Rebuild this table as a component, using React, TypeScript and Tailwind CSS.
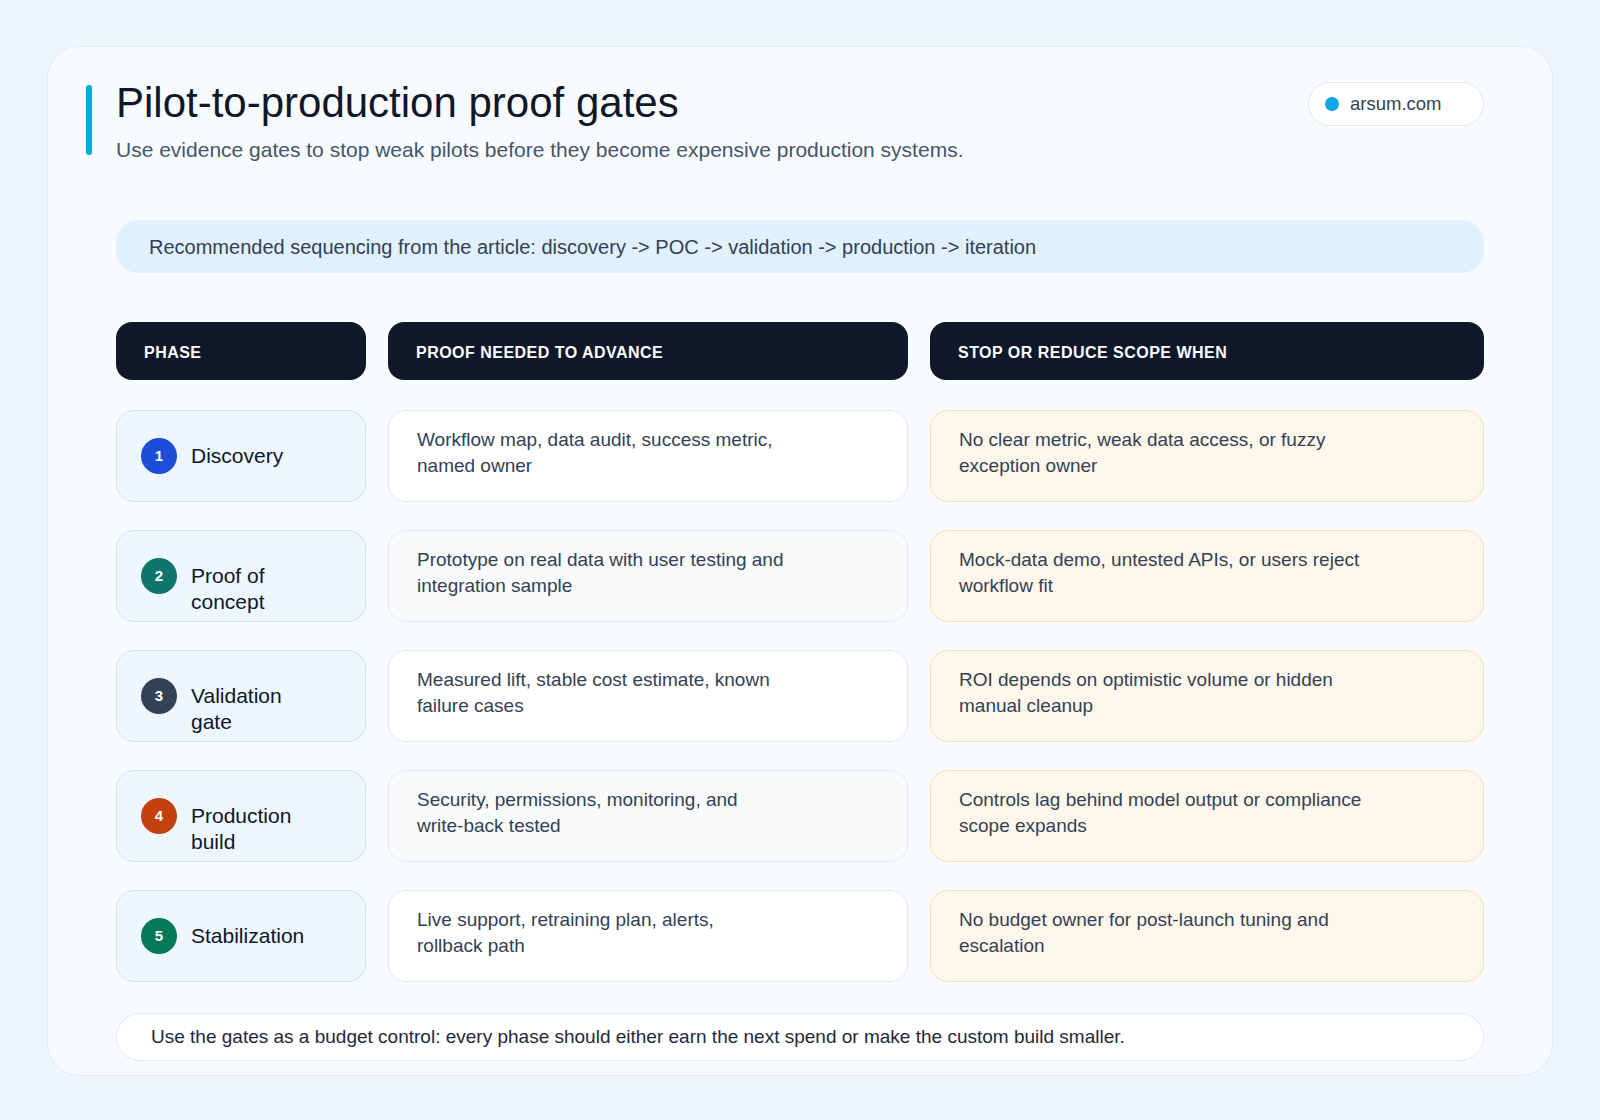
const rows = [
  {
    n: "1",
    phase: ["Discovery"],
    dot: "bg-[#1d4ed8]",
    proof: ["Workflow map, data audit, success metric,", "named owner"],
    stop: ["No clear metric, weak data access, or fuzzy", "exception owner"],
    shade: false,
  },
  {
    n: "2",
    phase: ["Proof of", "concept"],
    dot: "bg-[#0f766e]",
    proof: ["Prototype on real data with user testing and", "integration sample"],
    stop: ["Mock-data demo, untested APIs, or users reject", "workflow fit"],
    shade: true,
  },
  {
    n: "3",
    phase: ["Validation", "gate"],
    dot: "bg-[#334155]",
    proof: ["Measured lift, stable cost estimate, known", "failure cases"],
    stop: ["ROI depends on optimistic volume or hidden", "manual cleanup"],
    shade: false,
  },
  {
    n: "4",
    phase: ["Production", "build"],
    dot: "bg-[#c2410c]",
    proof: ["Security, permissions, monitoring, and", "write-back tested"],
    stop: ["Controls lag behind model output or compliance", "scope expands"],
    shade: true,
  },
  {
    n: "5",
    phase: ["Stabilization"],
    dot: "bg-[#047857]",
    proof: ["Live support, retraining plan, alerts,", "rollback path"],
    stop: ["No budget owner for post-launch tuning and", "escalation"],
    shade: false,
  },
];

const cols = "grid grid-cols-[250px_520px_1fr] gap-x-[22px]";

function Lines({ lines }: { lines: string[] }) {
  return (
    <>
      {lines.map((l) => (
        <span key={l} className="block whitespace-nowrap">
          {l}
        </span>
      ))}
    </>
  );
}

export default function App() {
  return (
    <div className="min-h-screen bg-[#eef5fc] px-[47px] pt-[46px] font-['Liberation_Sans',Arial,sans-serif]">
      <div className="rounded-[32px] border border-[#e3eaf2] bg-[#f8fbfe] px-[38px] pt-[31px] pb-[14px]">
        {/* header */}
        <div className="flex items-start justify-between pr-[30px]">
          <div className="flex items-start gap-6">
            <div className="mt-[7px] h-[70px] w-[6px] rounded-full bg-[#0ea5e9]" />
            <div>
              <h1 className="text-[42px] leading-[50px] text-[#0f172a]">
                Pilot-to-production proof gates
              </h1>
              <p className="mt-[8px] text-[21px] leading-[28px] text-[#475569]">
                Use evidence gates to stop weak pilots before they become expensive production systems.
              </p>
            </div>
          </div>
          <div className="mt-[4px] flex h-[44px] w-[176px] items-center gap-[11px] rounded-full border border-[#dfe6ee] bg-white pl-[16px]">
            <span className="h-[14px] w-[14px] rounded-full bg-[#0ea5e9]" />
            <span className="text-[18.5px] text-[#334155]">arsum.com</span>
          </div>
        </div>

        {/* body */}
        <div className="px-[30px]">
          <div className="mt-[56px] flex h-[53px] items-center rounded-[22px] bg-[#e0f0fd] pl-[33px] text-[20px] text-[#334155]">
            Recommended sequencing from the article: discovery -&gt; POC -&gt; validation -&gt; production -&gt; iteration
          </div>

          <div className={`${cols} mt-[49px]`}>
            {["Phase", "Proof needed to advance", "Stop or reduce scope when"].map((h) => (
              <div
                key={h}
                className="flex h-[58px] items-center rounded-[16px] bg-[#0f172a] pl-[28px] pt-[3px] text-[16px] font-semibold uppercase tracking-[0.03em] text-white"
              >
                {h}
              </div>
            ))}
          </div>

          <div className="mt-[30px] flex flex-col gap-[28px]">
            {rows.map((r) => (
              <div key={r.n} className={`${cols} h-[92px]`}>
                <div className="flex items-center gap-[14px] rounded-[18px] border border-[#cfe1f6] bg-[#eef6ff] pl-[24px]">
                  <span
                    className={`flex h-[36px] w-[36px] shrink-0 items-center justify-center rounded-full text-[15px] font-bold text-white ${r.dot}`}
                  >
                    {r.n}
                  </span>
                  <span className="h-[26px] text-[21px] leading-[26px] text-[#0f172a]">
                    <Lines lines={r.phase} />
                  </span>
                </div>
                <div
                  className={`rounded-[18px] border border-[#e2e8f0] pl-[28px] pt-[16px] text-[19px] leading-[26px] text-[#334155] ${
                    r.shade ? "bg-[#f8fafc]" : "bg-white"
                  }`}
                >
                  <Lines lines={r.proof} />
                </div>
                <div className="rounded-[18px] border border-[#fadcb8] bg-[#fff7ec] pl-[28px] pt-[16px] text-[19px] leading-[26px] text-[#334155]">
                  <Lines lines={r.stop} />
                </div>
              </div>
            ))}
          </div>

          <div className="mt-[31px] flex h-[48px] items-center rounded-full border border-[#e2e8f0] bg-white pl-[34px] text-[19px] text-[#1e293b]">
            Use the gates as a budget control: every phase should either earn the next spend or make the custom build smaller.
          </div>
        </div>
      </div>
    </div>
  );
}
